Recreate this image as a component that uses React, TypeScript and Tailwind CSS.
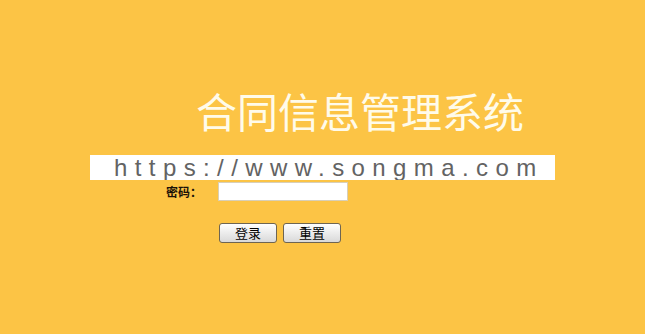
export default function App() {
  return (
    <main className="w-full h-[334px] bg-[#fcc445] overflow-hidden font-['Liberation_Sans','Noto_Sans_CJK_SC',sans-serif]">
      <div className="pt-[86px] pl-[196px]">
        <h1 className="text-[41px] leading-[48px] font-normal text-[#fffbea] font-['Noto_Sans_CJK_SC',serif] whitespace-nowrap">
          合同信息管理系统
        </h1>
      </div>

      <div className="mt-[21px] ml-[90px] w-[465px] h-[25px] bg-white flex items-center pl-[24px] overflow-hidden">
        <span className="text-[24px] leading-[25px] tracking-[7.4px] text-[#636363] whitespace-nowrap">
          https://www.songma.com
        </span>
      </div>

      <div className="flex items-center mt-[2px]">
        <label className="ml-[166px] w-[52px] text-[12px] font-bold text-[#1a1208] font-['Noto_Sans_CJK_SC',serif]">
          密码：
        </label>
        <input
          type="password"
          className="w-[130px] h-[19px] bg-white border border-[#d8cfb8] outline-none"
        />
      </div>

      <div className="flex gap-[6px] ml-[219px] mt-[22px]">
        <button className="w-[58px] h-[20px] rounded-[3px] border border-[#6e6552] bg-gradient-to-b from-white to-[#d9d9d9] text-[13px] leading-[18px] text-black font-['Noto_Sans_CJK_SC',sans-serif]">
          登录
        </button>
        <button className="w-[58px] h-[20px] rounded-[3px] border border-[#6e6552] bg-gradient-to-b from-white to-[#d9d9d9] text-[13px] leading-[18px] text-black font-['Noto_Sans_CJK_SC',sans-serif]">
          重置
        </button>
      </div>
    </main>
  );
}
